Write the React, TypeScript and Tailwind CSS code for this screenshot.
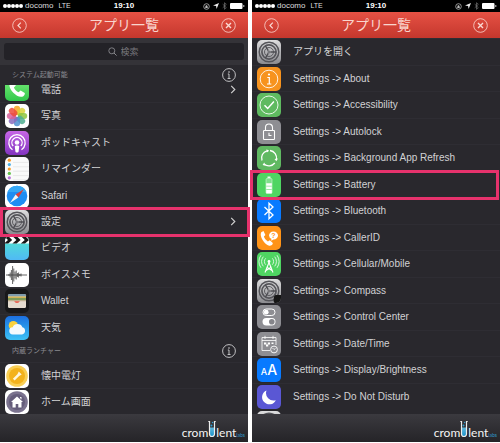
import { useId } from "react";
import type { ReactNode } from "react";

const JP = "font-['Liberation_Sans','Noto_Sans_CJK_JP',sans-serif]";

function Tile({ bg, children }: { bg: string; children?: ReactNode }) {
  return (
    <span className={`block size-6 shrink-0 overflow-hidden rounded-[5px] ${bg}`}>
      <svg viewBox="0 0 24 24" className="block size-6" fill="none" aria-hidden="true">
        {children}
      </svg>
    </span>
  );
}

function Gear({ badge = false }: { badge?: boolean }) {
  return (
    <Tile bg="bg-linear-to-b from-[#dededf] to-[#8b8b8f]">
      <circle cx="12" cy="12" r="9.8" stroke="#55555a" strokeWidth="1.5" />
      <circle cx="12" cy="12" r="7.1" stroke="#55555a" strokeWidth="1.7" />
      <circle cx="12" cy="12" r="4.5" stroke="#5d5d62" strokeWidth="1" />
      <circle cx="12" cy="12" r="1.6" fill="#77777b" />
      <path d="M13.500 12H19M11.200 10.700 8.500 6M11.200 13.300 8.500 18" stroke="#4e4e53" strokeWidth="1.500" />
      {badge && <path d="M17 17.500 18.500 16H24v8h-6.500L16.500 22z" fill="#161616" />}
    </Tile>
  );
}

function Phone() {
  return (
    <Tile bg="bg-linear-to-b from-[#79ee7b] to-[#2fc94b]">
      <path
        d="M6.3 4.6 8.5 4l2.3 4.4-1.9 2c.8 2 2.500 3.800 4.700 4.900l2-1.700 4.200 2.500c.2 1-.6 3-2.600 3.600C12 21.200 3.500 12.500 4.500 7.500c.2-1.300.9-2.300 1.800-2.900z"
        fill="#fff"
      />
    </Tile>
  );
}

const PETALS = ["#f6a723", "#d9d33b", "#8dc63f", "#4fae8f", "#4f8fd0", "#8a6bbd", "#d8619b", "#ec4a3b"];

function Photos() {
  return (
    <Tile bg="bg-white">
      {PETALS.map((color, i) => (
        <rect
          key={color}
          x="8.900"
          y="1.800"
          width="6.200"
          height="9.400"
          rx="3"
          fill={color}
          fillOpacity=".85"
          transform={`rotate(${i * 45} 12 12)`}
        />
      ))}
      <circle cx="12" cy="12" r=".8" fill="#fff" />
    </Tile>
  );
}

function Podcasts() {
  return (
    <Tile bg="bg-linear-to-b from-[#c766e6] to-[#8333c0]">
      <path d="M7.500 18.700a8.200 8.200 0 1 1 9 0" stroke="#fff" strokeWidth="1.300" />
      <path d="M8.200 15a5.100 5.100 0 1 1 7.600 0" stroke="#fff" strokeWidth="1.300" />
      <circle cx="12" cy="11.500" r="2.300" fill="#fff" />
      <path d="M9.800 15.500c0-1.200 4.400-1.200 4.400 0l-.6 5c-.1 1.300-3.100 1.300-3.200 0z" fill="#fff" />
    </Tile>
  );
}

const REMINDER_COLORS = ["#f79a2b", "#4ab0e8", "#f79a2b", "#63c24c", "#b872d8"];

function Reminders() {
  return (
    <Tile bg="bg-[#fafafa]">
      {REMINDER_COLORS.map((color, i) => (
        <g key={i}>
          <circle cx="4.300" cy={3.2 + i * 4.4} r="1.600" fill={color} />
          <path d={`M8 ${5.4 + i * 4.4}h16`} stroke="#dcdcdc" strokeWidth=".6" />
        </g>
      ))}
    </Tile>
  );
}

function Safari() {
  return (
    <Tile bg="bg-white">
      <circle cx="12" cy="12" r="10.300" fill="#1f8df2" />
      <path d="M2.500 8a10.300 10.300 0 0 1 19 0z" fill="#35a8f6" />
      <path d="M19 5 10.600 10.600 13.400 13.400z" fill="#d8403c" />
      <path d="m5 19 5.600-8.400 2.800 2.800z" fill="#f4f4f4" />
    </Tile>
  );
}

function Videos() {
  return (
    <Tile bg="bg-linear-to-b from-[#54e6c8] to-[#50b9f5]">
      <path d="M0 0h24v7.500H0z" fill="#fff" />
      <path
        d="M-1 0 3 4-1 7.500h4.200L7.200 4 3.200 0zM7.400 0l4 4-4 3.500h4.200l4-3.500-4-4zM15.800 0l4 4-4 3.500H20L24 4l-4-4z"
        fill="#161616"
      />
    </Tile>
  );
}

function VoiceMemos() {
  return (
    <Tile bg="bg-white">
      <path
        d="M1 12h21M4 11v2M5.200 9.500v5M6.400 7v10M7.600 3v18M8.800 5.500v13M10 8.500v7M11.200 7.500v9M12.400 10v4M13.600 9.500v5M14.800 11v2M16 10.500v3"
        stroke="#3c3c3c"
        strokeWidth=".8"
      />
    </Tile>
  );
}

function Wallet() {
  return (
    <Tile bg="bg-[#18181a]">
      <rect x="3" y="5" width="18" height="14" rx="1.500" fill="#e5dbcf" />
      <path d="M3 6.500Q3 5 4.500 5h15Q21 5 21 6.500v1H3z" fill="#7e9bab" />
      <path d="M3 7.500h18V9H3z" fill="#d3b455" />
      <path d="M3 9h18v2.500H3z" fill="#7d9b59" />
      <path d="M3 11.500h18v.8H3z" fill="#c9a78c" />
      <path d="M9.300 12.300h5.400c-.6 2.300-4.800 2.300-5.400 0z" fill="#ea5546" />
    </Tile>
  );
}

function Weather() {
  return (
    <Tile bg="bg-linear-to-b from-[#1d6fe0] to-[#3fc2f5]">
      <circle cx="8.300" cy="9.500" r="4.600" fill="#fbd23c" />
      <path d="M8 18.500a3.600 3.600 0 0 1-.3-7.200 5.200 5.200 0 0 1 9.700 0 3.700 3.700 0 0 1-.4 7.200z" fill="#f5fafd" />
    </Tile>
  );
}

function Flashlight() {
  return (
    <Tile bg="bg-white">
      <circle cx="12" cy="12" r="10.800" fill="#f9cf55" />
      <circle cx="12" cy="12" r="8" fill="#f3b21c" />
      <path d="m13.800 7.500 2.900 2.900-2.500 1.500-4.600 4.600-1.700-1.700 4.500-4.600z" fill="#fff6dc" />
    </Tile>
  );
}

function Home() {
  return (
    <Tile bg="bg-white">
      <circle cx="12" cy="12" r="10.800" fill="#7b738f" />
      <circle cx="12" cy="12" r="8" fill="#655d7b" />
      <path d="m12 6.500 6 5.500h-1.500v5.500h-3.200V14h-2.600v3.500H7.500V12H6zM15 7h1.500v2.500L15 8z" fill="#fff" />
    </Tile>
  );
}

function About() {
  return (
    <Tile bg="bg-[#f7931e]">
      <circle cx="12" cy="12" r="8.800" stroke="#fff" strokeOpacity=".85" strokeWidth="1" />
      <circle cx="12" cy="7.500" r="1.100" fill="#fff" />
      <path d="M10.300 10.500h2V17M10 17h4.300" stroke="#fff" strokeWidth="1.200" />
    </Tile>
  );
}

function Accessibility() {
  return (
    <Tile bg="bg-[#5fba60]">
      <circle cx="12" cy="12" r="9" stroke="#fff" strokeOpacity=".85" strokeWidth="1" />
      <path d="m7.500 12.300 3.200 3.200 6.200-7" stroke="#fff" strokeWidth="1.500" />
    </Tile>
  );
}

function Autolock() {
  return (
    <Tile bg="bg-[#8e8e93]">
      <rect x="6.500" y="10.500" width="11" height="9" rx=".8" stroke="#fff" strokeWidth="1.100" />
      <path d="M8.500 10.500v-3a3.500 3.500 0 0 1 7 0v3M12 12.800v2.700h2.500" stroke="#fff" strokeWidth="1.100" />
    </Tile>
  );
}

function Refresh() {
  return (
    <Tile bg="bg-[#60b962]">
      <path
        d="M5 14.500A7.500 7.500 0 0 1 10 4.800M13 4.500a7.500 7.500 0 0 1 6.400 9M17.800 17A7.500 7.500 0 0 1 7 18"
        stroke="#fff"
        strokeWidth="1.300"
      />
      <path d="m9.500 3.200 2.700 1.500L9.800 6.600zM21 12.400l-1.700 2.800-1.800-2.300zM8.600 19.700l-3-.6 1.600-2.500z" fill="#fff" />
    </Tile>
  );
}

function BatteryTile() {
  return (
    <Tile bg="bg-[#4fd562]">
      <path d="M10.500 3.500h3V5h-3z" fill="#e6fbe9" />
      <rect x="9" y="5.500" width="6" height="15" rx="1" fill="#7ee08b" stroke="#d3f7d9" strokeWidth=".6" />
      <path d="M9.200 10.200h5.600v2.600H9.200zM9.200 13.600h5.600v2.600H9.200zM9.200 17h5.600v3.200H9.200z" fill="#fff" />
    </Tile>
  );
}

function Bluetooth() {
  return (
    <Tile bg="bg-[#087aff]">
      <path d="m7.500 8 8.500 8-4 3.800V4.200L16 8l-8.500 8" stroke="#fff" strokeWidth="1.300" />
    </Tile>
  );
}

function CallerId() {
  return (
    <Tile bg="bg-[#ff9317]">
      <path
        d="M4.200 6.200 6.500 5l1.900 4-1.500 1.600c.7 2 1.900 3.600 4 4.900l1.900-1.300 3 2.700c.2 1.400-1.600 3.100-3.600 2.800C7.500 18.700 2 10 4.200 6.200z"
        fill="#fff"
      />
      <path
        d="M16.500 5.500c2.600 0 4.500 1.800 4.500 4s-1.900 4-4.500 4l-2.300 1.300.2-2A4 4 0 0 1 12 9.500c0-2.200 1.900-4 4.500-4z"
        fill="#fff"
      />
      <text x="16.500" y="12.200" textAnchor="middle" fontSize="7" fontWeight="700" fill="#ff9317" className={JP}>
        ?
      </text>
    </Tile>
  );
}

function Cellular() {
  return (
    <Tile bg="bg-[#4fd562]">
      <path d="m8 20.500 4-10 4 10M9 18.500l5.500-3.500M15 18.500 9.500 15" stroke="#fff" strokeWidth="1.100" />
      <circle cx="12" cy="9.500" r="1.400" fill="#fff" />
      <path
        d="M8.700 12.700a4.600 4.600 0 0 1 0-6.400M6.300 14.300a7.500 7.500 0 0 1 0-9.600M4 15.800a10.500 10.500 0 0 1 0-12.600M15.300 12.700a4.600 4.600 0 0 0 0-6.400M17.700 14.300a7.500 7.500 0 0 0 0-9.600M20 15.800a10.500 10.500 0 0 0 0-12.600"
        stroke="#fff"
        strokeOpacity=".85"
        strokeWidth=".9"
      />
    </Tile>
  );
}

function ControlCenter() {
  return (
    <Tile bg="bg-[#8e8e93]">
      <rect x="6" y="4" width="12" height="6.500" rx="3.200" stroke="#fff" strokeWidth="1" />
      <circle cx="9.200" cy="7.200" r="2.400" fill="#fff" />
      <rect x="5.500" y="13" width="13" height="7.500" rx="3.700" fill="#fff" />
      <circle cx="14.800" cy="16.700" r="2.800" fill="#85858a" />
    </Tile>
  );
}

function DateTime() {
  return (
    <Tile bg="bg-[#8e8e93]">
      <path d="M13 18.500H5V5.500h14V13M5 8.500h14M8 3.800V7M16 3.800V7" stroke="#fff" strokeOpacity=".9" strokeWidth=".9" />
      <path d="M7 10.500h2.300v2H7zM10.800 10.500H13v2h-2.200zM9 12.500h2.200v2H9zM14.500 10.500h2v1.500h-2z" fill="#fff" />
      <circle cx="17" cy="17.500" r="3.400" stroke="#fff" strokeWidth=".9" />
      <path d="m15.500 16 1.500 1.500 1.500-1" stroke="#fff" strokeWidth=".8" />
    </Tile>
  );
}

function Display() {
  return (
    <span className="flex size-6 shrink-0 items-baseline justify-center rounded-[5px] bg-[#087aff] font-['Inter',sans-serif] text-[9px] leading-6 font-medium text-white">
      A<span className="text-[14px]">A</span>
    </span>
  );
}

function Moon() {
  return (
    <Tile bg="bg-[#5a57d4]">
      <path d="M9.500 5.500a7.200 7.200 0 1 0 9.300 9.700A7.500 7.500 0 0 1 9.500 5.500z" fill="#fff" />
    </Tile>
  );
}

function StatusBar() {
  return (
    <div className="flex h-3 items-center bg-black px-[3px] font-['Liberation_Sans',sans-serif] text-[8px] leading-3 text-[#dedede]">
      <div className="flex flex-1 items-center">
        <span className="mr-[2px] flex">
          {[0, 1, 2, 3, 4].map((dot) => (
            <i key={dot} className="size-1 rounded-full bg-white" />
          ))}
        </span>
        <span>docomo</span>
        <span className="ml-[5px] text-[7px]">LTE</span>
      </div>
      <time className="font-bold text-white">19:10</time>
      <div className="flex flex-1 items-center justify-end gap-[3px]">
        <svg viewBox="0 0 8 8" className="size-[7px]" fill="none" aria-hidden="true">
          <circle cx="4" cy="4" r="3.200" stroke="#bbb" strokeWidth=".9" />
          <path d="M2.600 3.600h2.800v2H2.600zM3.200 3.600V2.500h1.600v1.100" fill="#bbb" />
        </svg>
        <svg viewBox="0 0 6 6" className="size-[6px]" aria-hidden="true">
          <path d="M6 0 3.600 6l-.5-3L0 2.500z" fill="#eee" />
        </svg>
        <svg viewBox="0 0 5 8" className="h-2 w-[5px]" fill="none" aria-hidden="true">
          <path d="m.7 2.200 3.600 3.400-1.800 1.700V.7l1.800 1.700L.7 5.800" stroke="#777" strokeWidth=".7" />
        </svg>
        <svg viewBox="0 0 15 6" className="h-[6px] w-[15px]" aria-hidden="true">
          <rect x="0" y="0" width="12.500" height="6" rx="1" fill="#fff" />
          <path d="M13.300 2h1v2h-1z" fill="#ccc" />
        </svg>
      </div>
    </div>
  );
}

function TitleBar() {
  return (
    <header className="flex h-[26px] items-center justify-between bg-linear-to-b from-[#e65144] to-[#c4372d] px-3">
      <button type="button" aria-label="戻る" className="size-[15px]">
        <svg viewBox="0 0 15 15" fill="none" stroke="#fbd9d3" aria-hidden="true">
          <circle cx="7.500" cy="7.500" r="6.800" strokeWidth=".8" />
          <path d="M8.800 4.700 6 7.500l2.800 2.800" strokeWidth="1.200" />
        </svg>
      </button>
      <h1 className={`${JP} text-[14px] leading-6 font-normal text-[#f9d5ce]`}>アプリ一覧</h1>
      <button type="button" aria-label="閉じる" className="size-[15px]">
        <svg viewBox="0 0 15 15" fill="none" stroke="#fbd9d3" aria-hidden="true">
          <circle cx="7.500" cy="7.500" r="6.800" strokeWidth=".8" />
          <path d="m5 5 5 5M10 5l-5 5" strokeWidth="1.400" />
        </svg>
      </button>
    </header>
  );
}

function Chevron() {
  return (
    <svg viewBox="0 0 6 10" className="h-[9px] w-[6px]" fill="none" aria-hidden="true">
      <path d="m1 1 4 4-4 4" stroke="#d0d0d0" strokeWidth="1.300" />
    </svg>
  );
}

interface RowProps {
  icon: ReactNode;
  label: string;
  chevron?: boolean;
  frame?: string;
}

function Row({ icon, label, chevron, frame }: RowProps) {
  return (
    <li className="relative flex items-center">
      <button
        type="button"
        className="flex flex-1 items-center border-t border-[#2e2d33] pt-px pr-3 pl-[5px] text-left"
      >
        {icon}
        <span className="ml-3 flex-1 text-[#d2d2d4]">{label}</span>
        {chevron && <Chevron />}
      </button>
      {frame && (
        <span className={`pointer-events-none absolute -top-px -bottom-[3px] z-10 border-[3px] border-[#e6326c] ${frame}`} />
      )}
    </li>
  );
}

/* The row that is scrolled halfway under the section heading. */
function ScrolledRow({ icon, label }: { icon: ReactNode; label: string }) {
  return (
    <li className="flex h-[17px]">
      <button type="button" className="flex flex-1 items-start pr-3 pl-[5px] text-left leading-none">
        <span className="flex h-4 items-end overflow-hidden">{icon}</span>
        <span className="ml-3 flex-1 text-[#d2d2d4]">{label}</span>
        <Chevron />
      </button>
    </li>
  );
}

function Section({ title, height }: { title: string; height: string }) {
  return (
    <div className={`flex items-center justify-between px-3 ${height}`}>
      <h2 className="text-[7px] leading-4 text-[#8a8a8f]">{title}</h2>
      <button type="button" aria-label={`${title}の情報`} className="size-[14px]">
        <svg viewBox="0 0 14 14" fill="none" stroke="#cfcfd1" aria-hidden="true">
          <circle cx="7" cy="7" r="6.400" strokeWidth=".9" />
          <circle cx="7" cy="4" r=".8" fill="#cfcfd1" stroke="none" />
          <path d="M5.800 6H7v4.500M5.600 10.500h2.900" strokeWidth=".9" />
        </svg>
      </button>
    </div>
  );
}

function Footer() {
  const liquid = useId();
  return (
    <footer className="flex h-7 items-end justify-end bg-linear-to-b from-[#3b3a3f] to-[#252428] pr-[3px] pb-px font-['Lato',sans-serif] text-[12px] leading-4 text-[#f4f4f4]">
      crom
      <svg viewBox="0 0 8 18" className="mb-[3px] h-[18px] w-[8px]" fill="none" aria-label="u">
        <defs>
          <linearGradient id={liquid} x1="0" y1="0" x2="0" y2="1">
            <stop offset="0" stopColor="#5fb8dc" />
            <stop offset="1" stopColor="#1791cb" />
          </linearGradient>
        </defs>
        <path d="M1.800 7.500h4.400v7a2.200 2.200 0 0 1-4.400 0z" fill={`url(#${liquid})`} />
        <path d="M.3 1.500h1.200V14a2.500 2.500 0 0 0 5 0V1.500h1.200" stroke="#ededed" strokeWidth="1.200" />
        <circle cx="3.500" cy="5.500" r="1" fill="#2e9fd3" />
        <circle cx="4.600" cy="2.500" r=".8" fill="#2e9fd3" />
      </svg>
      lent
      <span className="text-[5px] leading-3 text-[#3098cc]">labs</span>
    </footer>
  );
}

function Panel({ children }: { children: ReactNode }) {
  return (
    <section className={`flex min-w-0 flex-1 flex-col bg-[#29282d] text-[10px] leading-4 ${JP}`}>
      <StatusBar />
      <TitleBar />
      {children}
      <Footer />
    </section>
  );
}

export default function App() {
  return (
    <main className="flex gap-1 overflow-hidden bg-white pb-px">
      <Panel>
        <div className="bg-[#343338] px-1 py-[5px]">
          <label className="flex h-[17px] items-center justify-center gap-1 rounded-[3px] bg-[#232227] text-[#77767b]">
            <svg viewBox="0 0 9 9" className="size-[9px]" fill="none" stroke="#88888c" aria-hidden="true">
              <circle cx="3.800" cy="3.800" r="3" strokeWidth=".9" />
              <path d="m6 6 2.600 2.600" strokeWidth="1" />
            </svg>
            <input
              type="text"
              aria-label="検索"
              placeholder="検索"
              className="w-5 text-[9px] leading-4 outline-none placeholder:text-[#77767b]"
            />
          </label>
        </div>
        <Section title="システム起動可能" height="h-5" />
        <ul>
          <ScrolledRow icon={<Phone />} label="電話" />
        </ul>
        <ul className="grid h-[238px] auto-rows-fr">
          <Row icon={<Photos />} label="写真" />
          <Row icon={<Podcasts />} label="ポッドキャスト" />
          <Row icon={<Reminders />} label="リマインダー" />
          <Row icon={<Safari />} label="Safari" />
          <Row icon={<Gear />} label="設定" chevron frame="left-0 -right-[2px]" />
          <Row icon={<Videos />} label="ビデオ" />
          <Row icon={<VoiceMemos />} label="ボイスメモ" />
          <Row icon={<Wallet />} label="Wallet" />
          <Row icon={<Weather />} label="天気" />
        </ul>
        <Section title="内蔵ランチャー" height="h-[22px]" />
        <ul className="grid h-[52px] auto-rows-fr">
          <Row icon={<Flashlight />} label="懐中電灯" />
          <Row icon={<Home />} label="ホーム画面" />
        </ul>
      </Panel>
      <Panel>
        <ul className="grid h-[371px] auto-rows-fr">
          <Row icon={<Gear />} label="アプリを開く" />
          <Row icon={<About />} label="Settings -> About" />
          <Row icon={<Accessibility />} label="Settings -> Accessibility" />
          <Row icon={<Autolock />} label="Settings -> Autolock" />
          <Row icon={<Refresh />} label="Settings -> Background App Refresh" />
          <Row icon={<BatteryTile />} label="Settings -> Battery" frame="-left-[2px] right-px" />
          <Row icon={<Bluetooth />} label="Settings -> Bluetooth" />
          <Row icon={<CallerId />} label="Settings -> CallerID" />
          <Row icon={<Cellular />} label="Settings -> Cellular/Mobile" />
          <Row icon={<Gear badge />} label="Settings -> Compass" />
          <Row icon={<ControlCenter />} label="Settings -> Control Center" />
          <Row icon={<DateTime />} label="Settings -> Date/Time" />
          <Row icon={<Display />} label="Settings -> Display/Brightness" />
          <Row icon={<Moon />} label="Settings -> Do Not Disturb" />
        </ul>
        <div className="h-[5px] overflow-hidden pt-[2px] pl-[5px]">
          <Gear />
        </div>
      </Panel>
    </main>
  );
}
